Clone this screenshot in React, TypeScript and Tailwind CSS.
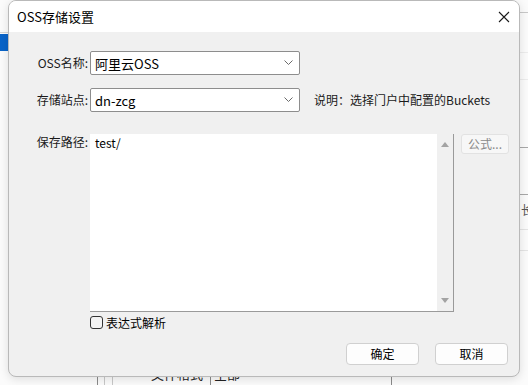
import React from "react";

const FONT = '"Noto Sans CJK SC", "Noto Sans", sans-serif';

function Chevron() {
  return (
    <svg width="9" height="6" viewBox="0 0 9 6" className="shrink-0">
      <polyline points="0.5,0.5 4.5,4.5 8.5,0.5" fill="none" stroke="#6a6a6a" strokeWidth="1" />
    </svg>
  );
}

function Select({ value }: { value: string }) {
  return (
    <div className="flex h-[24px] w-[210px] items-center justify-between rounded-[2px] border border-[#8d8d8d] bg-white pl-[4px] pr-[6px]">
      <span className="text-[13px] leading-none text-black">{value}</span>
      <Chevron />
    </div>
  );
}

function Label({ children }: { children: React.ReactNode }) {
  return <div className="w-[79px] shrink-0 text-right text-[12px] leading-none text-[#1a1a1a]">{children}</div>;
}

function Backdrop() {
  return (
    <>
      {/* left edge of the window behind */}
      <div className="absolute left-0 top-[32px] h-px w-[8px] bg-[#d6d6d6]" />
      <div className="absolute left-0 top-[34px] h-[17px] w-[8px] bg-[#0a64c8]" />
      {/* right edge */}
      <div className="absolute left-[520px] top-[12px] h-px w-[8px] bg-[#c8c8c8]" />
      <div className="absolute left-[520px] top-[52px] h-px w-[8px] bg-[#ececec]" />
      <div className="absolute left-[520px] top-[79px] h-px w-[8px] bg-[#ececec]" />
      <div className="absolute left-[520px] top-[147px] h-px w-[8px] bg-[#a8a8a8]" />
      <div className="absolute left-[520px] top-[194px] h-px w-[8px] bg-[#a8a8a8]" />
      <div className="absolute left-[521px] top-[204px] w-[7px] overflow-hidden whitespace-nowrap text-[12px] leading-none text-[#555]">长</div>
      <div className="absolute left-[520px] top-[229px] h-px w-[8px] bg-[#e4e4e4]" />
      <div className="absolute left-[520px] top-[250px] h-px w-[8px] bg-[#e4e4e4]" />
      {/* bottom edge */}
      <div className="absolute left-[97px] top-[377px] h-[8px] w-px bg-[#8a8a8a]" />
      <div className="absolute left-[104px] top-[377px] h-[8px] w-px bg-[#c8c8c8]" />
      <div className="absolute left-[112px] top-[377px] h-[8px] w-px bg-[#c8c8c8]" />
      <div className="absolute left-[151px] top-[367px] text-[13px] leading-none text-[#222]">文件格式</div>
      <div className="absolute left-[210px] top-[377px] h-[8px] w-px bg-[#8a8a8a]" />
      <div className="absolute left-[214px] top-[367px] text-[13px] leading-none text-[#222]">全部</div>
      <div className="absolute left-[391px] top-[377px] h-[8px] w-px bg-[#8a8a8a]" />
    </>
  );
}

export default function App() {
  return (
    <div className="relative h-[385px] w-[528px] overflow-hidden bg-[#fbfbfb]" style={{ fontFamily: FONT }}>
      <Backdrop />
      <div className="absolute left-[8px] top-0 z-10 flex h-[377px] w-[512px] flex-col overflow-hidden rounded-[8px] border border-[#b9b9b9] bg-[#f0f0f0] shadow-[0_2px_10px_rgba(0,0,0,0.12)]">
        {/* title bar */}
        <div className="flex h-[31px] shrink-0 items-center justify-between bg-white pl-[8px] pr-[9px]">
          <span className="text-[13px] leading-none text-black">OSS存储设置</span>
          <svg width="12" height="12" viewBox="0 0 12 12">
            <path d="M1 1 L11 11 M11 1 L1 11" stroke="#1a1a1a" strokeWidth="1.1" />
          </svg>
        </div>

        {/* body */}
        <div className="flex flex-1 flex-col pt-[19px]">
          <div className="flex items-center gap-[2px]">
            <Label>OSS名称:</Label>
            <Select value="阿里云OSS" />
          </div>

          <div className="mt-[13px] flex items-center gap-[2px]">
            <Label>存储站点:</Label>
            <Select value="dn-zcg" />
            <span className="ml-[12px] text-[12px] leading-none text-[#1a1a1a]">说明：选择门户中配置的Buckets</span>
          </div>

          <div className="mt-[22px] flex items-start gap-[2px]">
            <div className="pt-[2px]">
              <Label>保存路径:</Label>
            </div>
            <div className="flex flex-col">
              <div className="flex h-[178px] w-[364px] border-b border-r border-[#9a9a9a] bg-white">
                <div className="flex-1 pl-[5px] pt-[3px] text-[12px] leading-none text-black">test/</div>
                <div className="flex w-[16px] flex-col items-center justify-between bg-[#f0f0f0] py-[8px]">
                  <svg width="8" height="5" viewBox="0 0 8 5">
                    <polygon points="0,5 4,0 8,5" fill="#a3a3a3" />
                  </svg>
                  <svg width="8" height="5" viewBox="0 0 8 5">
                    <polygon points="0,0 8,0 4,5" fill="#a3a3a3" />
                  </svg>
                </div>
              </div>
              <div className="mt-[4px] flex items-center gap-[3px]">
                <div className="h-[13px] w-[13px] rounded-[3px] border border-[#333] bg-[#f4f4f4]" />
                <span className="text-[12px] leading-none text-black">表达式解析</span>
              </div>
            </div>
            <div className="ml-[5px] flex h-[20px] w-[48px] items-center justify-center rounded-[3px] border border-[#e2e2e2] bg-[#f7f7f7] text-[12px] leading-none text-[#8a8a8a]">
              公式...
            </div>
          </div>

          <div className="mt-[14px] flex justify-end gap-[16px] pr-[11px]">
            <div className="flex h-[22px] w-[73px] items-center justify-center rounded-[4px] border border-[#d0d0d0] bg-[#fdfdfd] text-[12px] leading-none text-black">
              确定
            </div>
            <div className="flex h-[22px] w-[73px] items-center justify-center rounded-[4px] border border-[#d0d0d0] bg-[#fdfdfd] text-[12px] leading-none text-black">
              取消
            </div>
          </div>
        </div>
      </div>
    </div>
  );
}
